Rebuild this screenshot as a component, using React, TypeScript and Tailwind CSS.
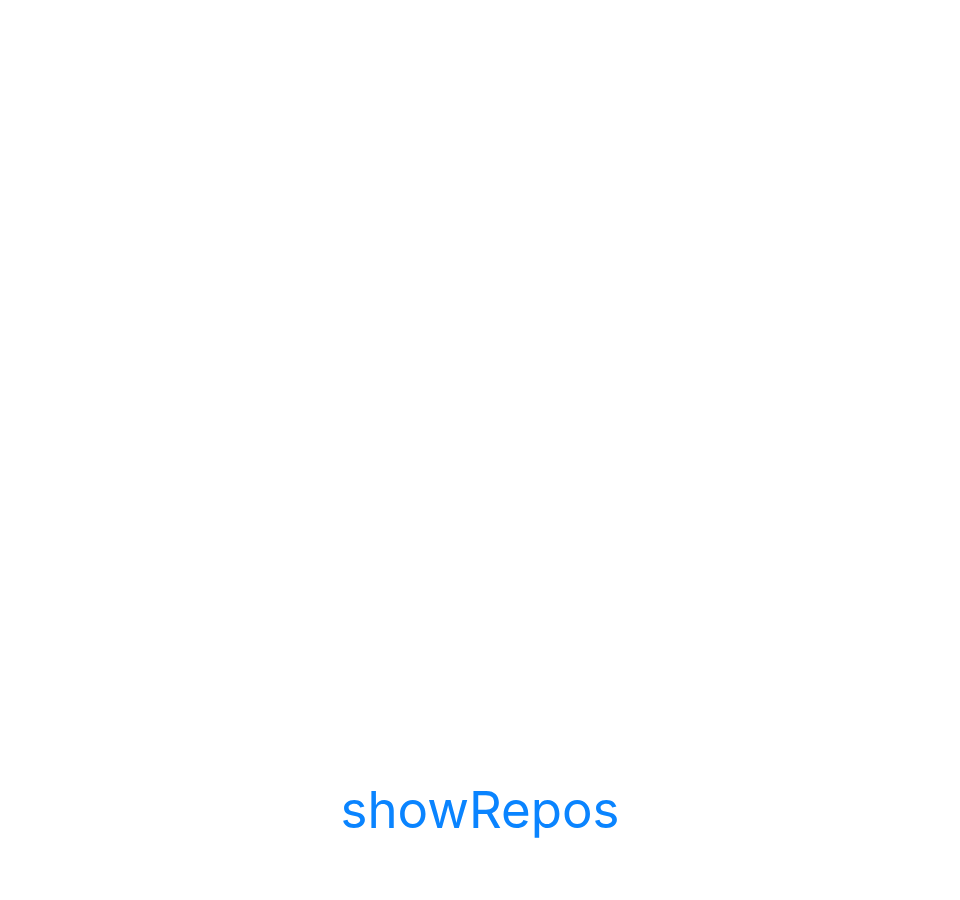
export default function App() {
  return (
    <div className="w-[960px] h-[900px] bg-white flex flex-col">
      {/* Bottom action */}
      <div className="flex-1" />
      <div className="flex justify-center pb-[65px]">
        <button className="font-['Inter',sans-serif] text-[51px] leading-none text-[#0a84ff]">
          showRepos
        </button>
      </div>
    </div>
  );
}
